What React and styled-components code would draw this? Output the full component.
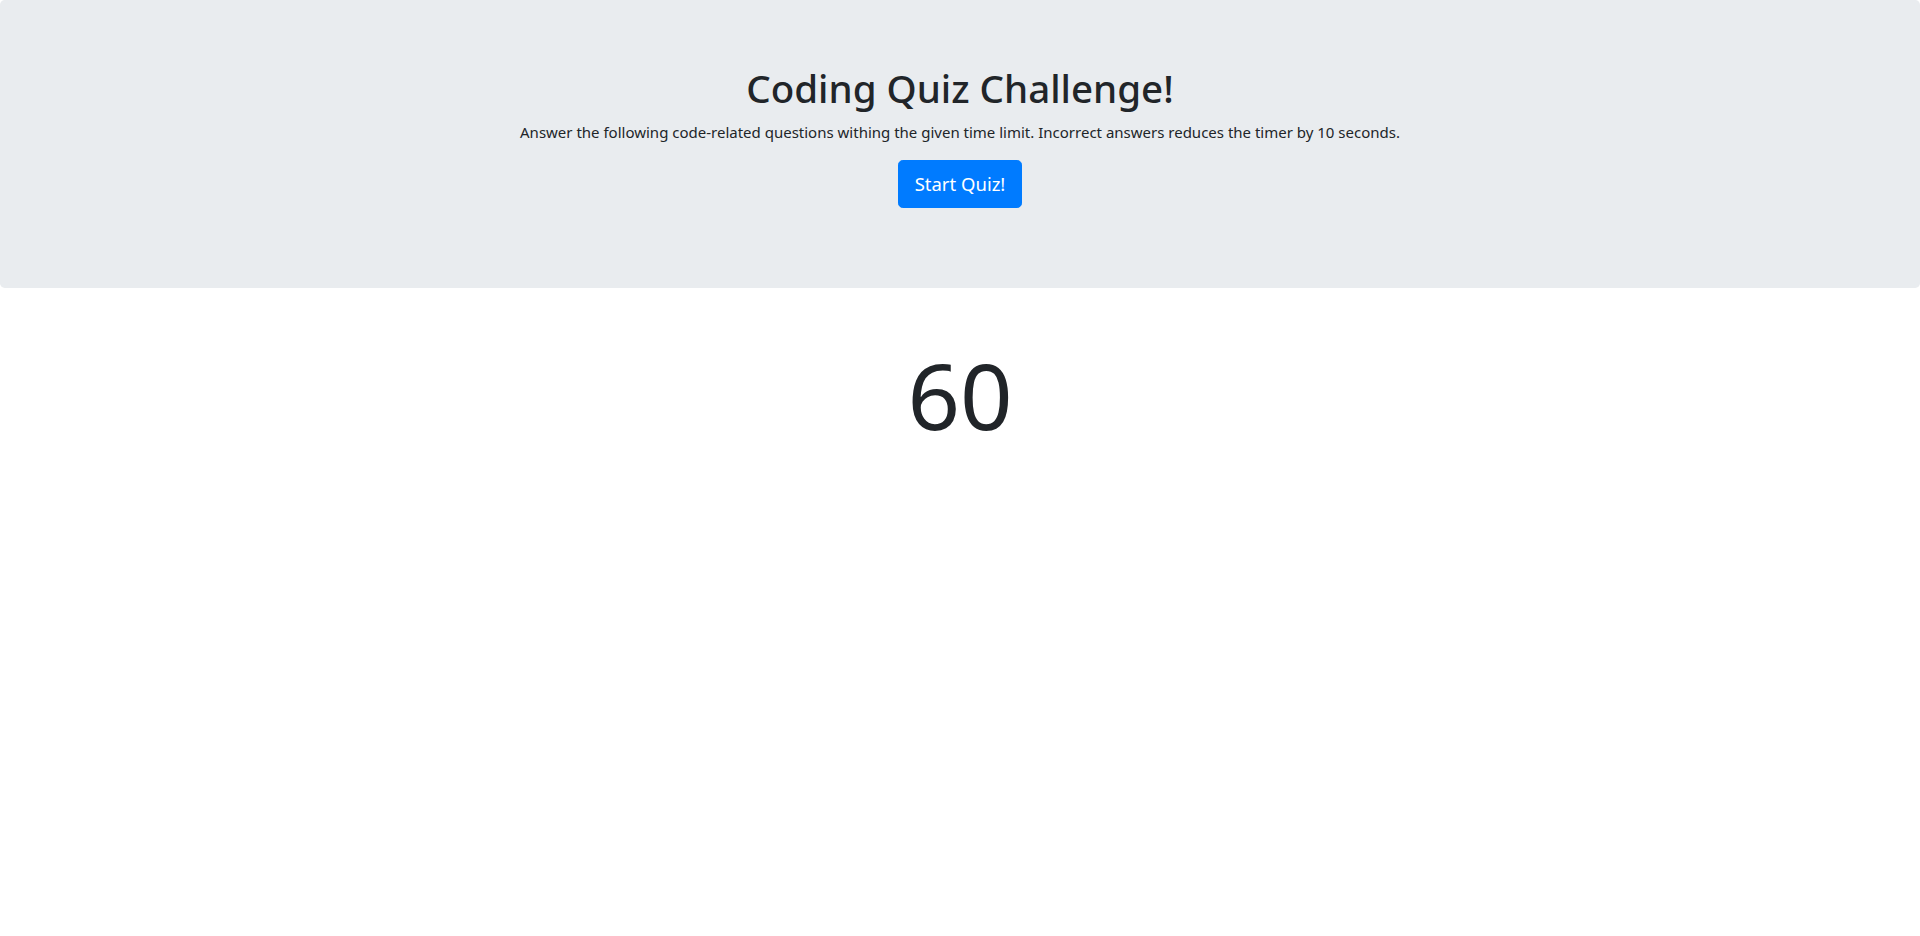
import React from "react";
import styled, { createGlobalStyle } from "styled-components";

const Global = createGlobalStyle`
  html, body { margin: 0; padding: 0; background: #fff; }
  body {
    font-family: "Noto Sans", "Open Sans", sans-serif;
    font-size: 16px;
    line-height: 1.5;
    color: #212529;
  }
  * { box-sizing: border-box; }
`;

const Jumbotron = styled.header`
  background: #e9ecef;
  border-radius: 4.8px;
  padding: 64px 32px 80px;
  margin-bottom: 32px;
  display: flex;
  flex-direction: column;
  align-items: center;
  text-align: center;
`;

const Title = styled.h1`
  margin: 0 0 8px;
  font-size: 38.5px;
  font-weight: 500;
  line-height: 48px;
`;

const Lead = styled.p`
  margin: 0 0 16px;
  font-size: 15px;
  line-height: 24px;
`;

const StartButton = styled.button`
  font-family: inherit;
  font-size: 18.5px;
  line-height: 30px;
  padding: 8px 16px;
  color: #fff;
  background: #007bff;
  border: 1px solid #007bff;
  border-radius: 4.8px;
  cursor: pointer;
`;

const Timer = styled.div`
  text-align: center;
  font-size: 92px;
  font-weight: 400;
  line-height: 110px;
  margin-top: 52px;
`;

export default function App() {
  return (
    <>
      <Global />
      <Jumbotron>
        <Title>Coding Quiz Challenge!</Title>
        <Lead>
          Answer the following code-related questions withing the given time limit. Incorrect answers reduces the timer by 10 seconds.
        </Lead>
        <StartButton>Start Quiz!</StartButton>
      </Jumbotron>
      <Timer>60</Timer>
    </>
  );
}
